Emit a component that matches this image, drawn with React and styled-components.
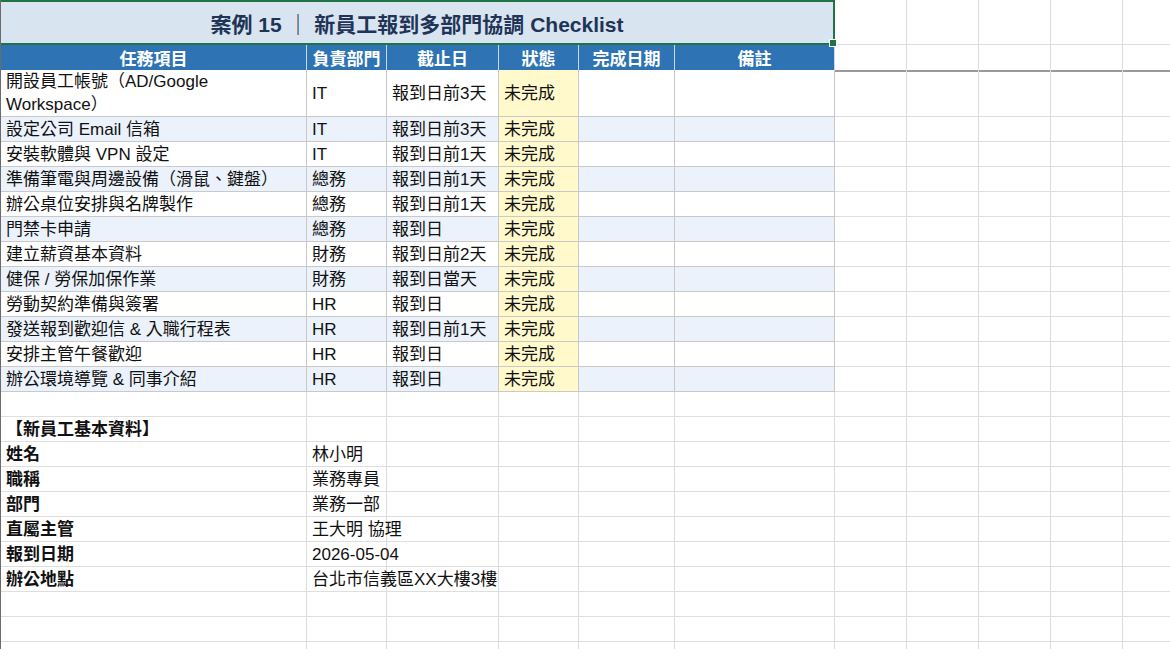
import React from 'react';
import styled, { createGlobalStyle } from 'styled-components';

const GlobalStyle = createGlobalStyle`
  html, body { margin: 0; padding: 0; background: #fff; }
  body { font-family: "Liberation Sans", "Noto Sans CJK TC", sans-serif; }
`;

const COLS = '306px 80px 112px 80px 96px 160px 72px 72px 72px 72px 48px';

const Sheet = styled.div`
  width: 1170px;
  height: 649px;
  overflow: hidden;
  border-left: 1px solid #6b6b6b;
  box-sizing: border-box;
`;

const Row = styled.div`
  display: grid;
  grid-template-columns: ${COLS};
  height: ${p => p.$h || 25}px;
  box-sizing: border-box;
`;

const Cell = styled.div`
  grid-column: span ${p => p.$span || 1};
  box-sizing: border-box;
  border-right: 1px solid ${p => (p.$inTable ? '#c9c9c9' : '#dedede')};
  border-bottom: 1px solid ${p => (p.$inTable ? '#c9c9c9' : '#dedede')};
  background: ${p => p.$bg || 'transparent'};
  color: #111;
  font-size: 17px;
  font-weight: ${p => (p.$bold ? 700 : 400)};
  line-height: 23px;
  padding: 0 5px;
  display: flex;
  align-items: center;
  white-space: ${p => (p.$wrap ? 'pre-line' : 'nowrap')};
  overflow: visible;
`;

const TitleCell = styled.div`
  grid-column: span 6;
  background: #d8e4ef;
  border: 2px solid #217346;
  border-left: none;
  color: #1f3456;
  font-size: 21px;
  font-weight: 700;
  display: flex;
  align-items: center;
  justify-content: center;
  position: relative;
  box-sizing: border-box;
`;

const Handle = styled.span`
  position: absolute;
  right: -4px;
  bottom: -4px;
  width: 6px;
  height: 6px;
  background: #217346;
  border: 1px solid #fff;
`;

const HeadCell = styled.div`
  background: #2e74b5;
  color: #fff;
  font-size: 17px;
  font-weight: 700;
  display: flex;
  align-items: center;
  justify-content: center;
  border-right: 1px solid #c9d8ea;
  border-bottom: 2px solid #9a9a9a;
  box-sizing: border-box;
  white-space: nowrap;
`;

const HeaderFiller = styled.div`
  border-right: 1px solid #dedede;
  border-bottom: 2px solid #9a9a9a;
  box-sizing: border-box;
`;

const headers = ['任務項目', '負責部門', '截止日', '狀態', '完成日期', '備註'];

const tasks = [
  ['開設員工帳號（AD/Google\nWorkspace）', 'IT', '報到日前3天'],
  ['設定公司 Email 信箱', 'IT', '報到日前3天'],
  ['安裝軟體與 VPN 設定', 'IT', '報到日前1天'],
  ['準備筆電與周邊設備（滑鼠、鍵盤）', '總務', '報到日前1天'],
  ['辦公桌位安排與名牌製作', '總務', '報到日前1天'],
  ['門禁卡申請', '總務', '報到日'],
  ['建立薪資基本資料', '財務', '報到日前2天'],
  ['健保 / 勞保加保作業', '財務', '報到日當天'],
  ['勞動契約準備與簽署', 'HR', '報到日'],
  ['發送報到歡迎信 & 入職行程表', 'HR', '報到日前1天'],
  ['安排主管午餐歡迎', 'HR', '報到日'],
  ['辦公環境導覽 & 同事介紹', 'HR', '報到日'],
];

const info = [
  ['姓名', '林小明'],
  ['職稱', '業務專員'],
  ['部門', '業務一部'],
  ['直屬主管', '王大明 協理'],
  ['報到日期', '2026-05-04'],
  ['辦公地點', '台北市信義區XX大樓3樓'],
];

const Blank = ({ n, from = 0 }) =>
  Array.from({ length: n }, (_, i) => <Cell key={'b' + (from + i)} />);

export default function App() {
  return (
    <>
      <GlobalStyle />
      <Sheet>
        <Row $h={45}>
          <TitleCell>
            案例 15 ｜ 新員工報到多部門協調 Checklist
            <Handle />
          </TitleCell>
          <Blank n={5} />
        </Row>
        <Row $h={25}>
          {headers.map(h => <HeadCell key={h}>{h}</HeadCell>)}
          {Array.from({ length: 5 }, (_, i) => <HeaderFiller key={i} />)}
        </Row>
        {tasks.map((t, i) => {
          const bg = i % 2 === 1 ? '#ebf2fb' : '#fff';
          return (
            <Row key={t[0]} $h={i === 0 ? 47 : 25}>
              <Cell $inTable $bg={bg} $wrap>{t[0]}</Cell>
              <Cell $inTable $bg={bg}>{t[1]}</Cell>
              <Cell $inTable $bg={bg}>{t[2]}</Cell>
              <Cell $inTable $bg="#fff9cc">未完成</Cell>
              <Cell $inTable $bg={bg} />
              <Cell $inTable $bg={bg} />
              <Blank n={5} />
            </Row>
          );
        })}
        <Row><Blank n={11} /></Row>
        <Row>
          <Cell $bold>【新員工基本資料】</Cell>
          <Blank n={10} />
        </Row>
        {info.map(([k, v]) => (
          <Row key={k}>
            <Cell $bold>{k}</Cell>
            <Cell>{v}</Cell>
            <Blank n={9} />
          </Row>
        ))}
        <Row><Blank n={11} /></Row>
        <Row><Blank n={11} /></Row>
        <Row><Blank n={11} /></Row>
      </Sheet>
    </>
  );
}
